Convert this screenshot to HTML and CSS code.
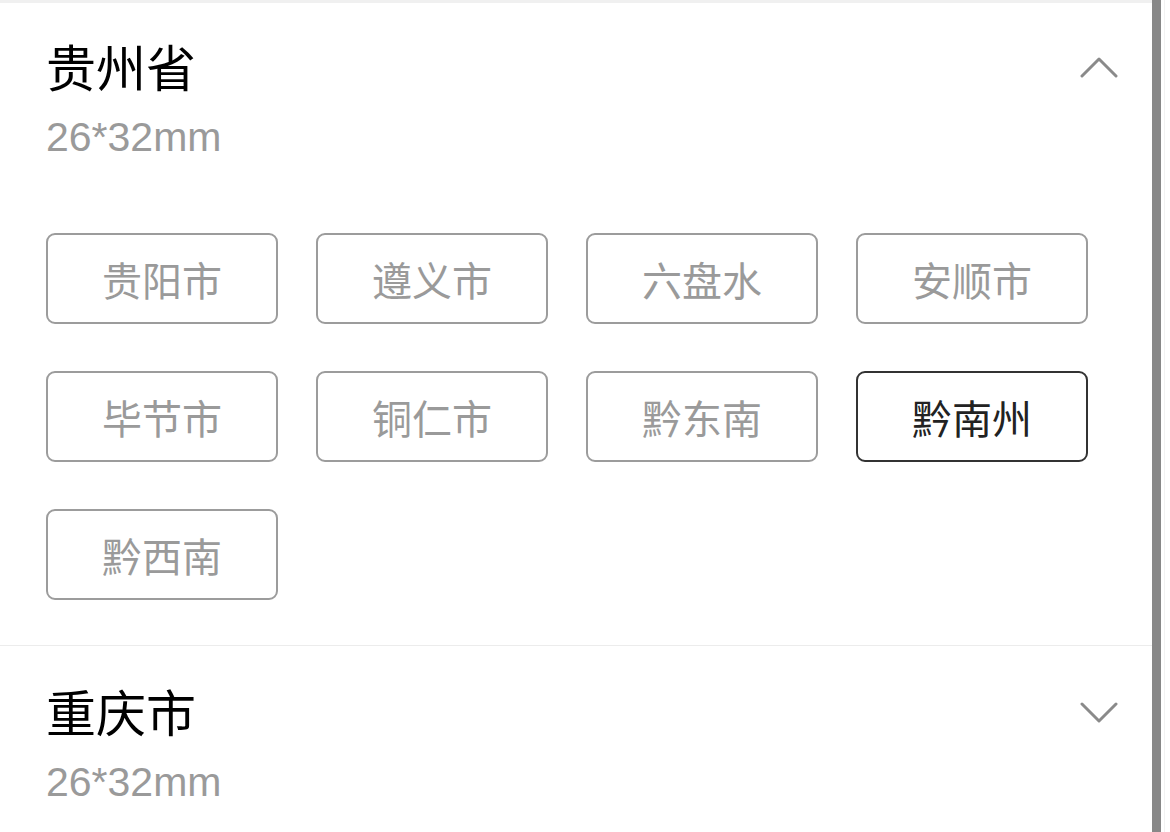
FILE: index.html
```html
<!DOCTYPE html>
<html lang="zh">
<head>
<meta charset="utf-8">
<link rel="stylesheet" href="styles.css">
</head>
<body>
<div class="page">
  <div class="main">
    <section class="section first">
      <div class="header">
        <div class="title">贵州省</div>
        <svg class="chev" width="38" height="22" viewBox="0 0 38 22"><polyline points="2,20 19,3 36,20" fill="none" stroke="#8a8a8a" stroke-width="3" stroke-linecap="round" stroke-linejoin="round"/></svg>
      </div>
      <div class="sub">26*32mm</div>
      <div class="tags">
        <div class="tag">贵阳市</div>
        <div class="tag">遵义市</div>
        <div class="tag">六盘水</div>
        <div class="tag">安顺市</div>
        <div class="tag">毕节市</div>
        <div class="tag">铜仁市</div>
        <div class="tag">黔东南</div>
        <div class="tag active">黔南州</div>
        <div class="tag">黔西南</div>
      </div>
    </section>
    <section class="section second">
      <div class="header">
        <div class="title">重庆市</div>
        <svg class="chev" width="38" height="22" viewBox="0 0 38 22"><polyline points="2,3 19,20 36,3" fill="none" stroke="#8a8a8a" stroke-width="3" stroke-linecap="round" stroke-linejoin="round"/></svg>
      </div>
      <div class="sub">26*32mm</div>
    </section>
  </div>
  <div class="scrollbar"></div>
  <div class="gutter"></div>
</div>
</body>
</html>
```
FILE: styles.css
```css
html, body {
  margin: 0;
  padding: 0;
  background: #fff;
}
body {
  font-family: "Noto Sans CJK SC", "Noto Sans", sans-serif;
  color: #000;
}
.page {
  display: flex;
  height: 832px;
  overflow: hidden;
}
.main {
  width: 1152px;
  flex: none;
}
.scrollbar {
  width: 9px;
  flex: none;
  background: #888;
}
.gutter {
  flex: 1;
  border-right: 5px solid #fff;
  box-shadow: inset -1px 0 0 #f2f2f2;
}
.section {
  padding: 0 34px 0 46px;
}
.first {
  border-top: 3px solid #f0f0f0;
  padding-top: 37px;
  padding-bottom: 45px;
}
.second {
  border-top: 1px solid #ececec;
  padding-top: 39px;
}
.header {
  display: flex;
  justify-content: space-between;
  align-items: center;
  height: 50px;
}
.title {
  font-size: 50px;
  line-height: 50px;
  color: #000;
}
.chev {
  display: block;
  margin-top: 4px;
}
.sub {
  margin-top: 27px;
  font-family: "Liberation Sans", "Noto Sans CJK SC", sans-serif;
  font-size: 41px;
  line-height: 40px;
  color: #9a9a9a;
}
.tags {
  margin-top: 76px;
  display: grid;
  grid-template-columns: repeat(4, 232px);
  column-gap: 38px;
  row-gap: 47px;
}
.tag {
  box-sizing: border-box;
  height: 91px;
  border: 2px solid #9c9c9c;
  border-radius: 9px;
  display: flex;
  align-items: center;
  justify-content: center;
  font-size: 40px;
  color: #9a9a9a;
}
.tag.active {
  border-color: #333;
  color: #222;
}
```
